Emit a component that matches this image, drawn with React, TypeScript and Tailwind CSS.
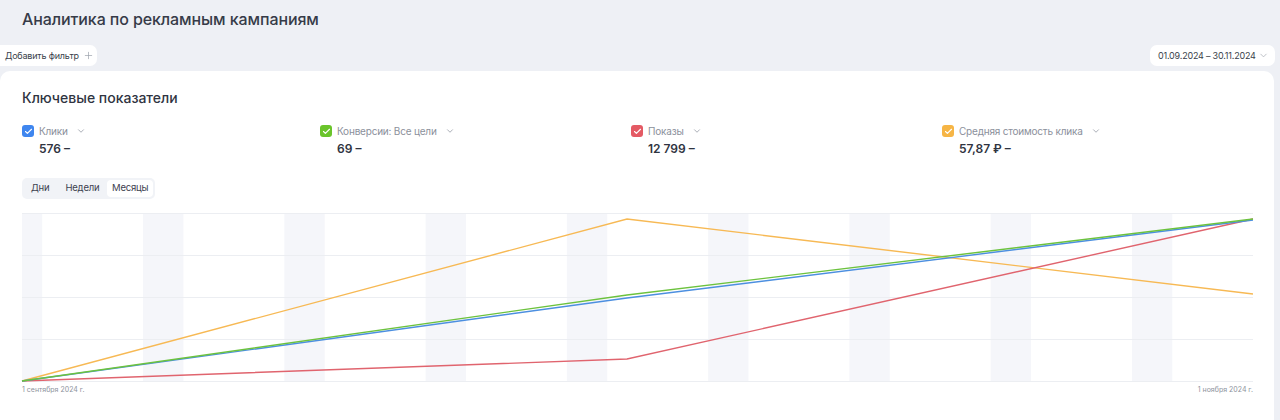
import { ChevronDown, Plus, Check } from "lucide-react";

const font = { fontFamily: "Inter, 'Noto Sans', sans-serif" };

const metrics = [
  { label: "Клики", value: "576", color: "bg-[#3f86ef]", w: "w-[298px]" },
  { label: "Конверсии: Все цели", value: "69", color: "bg-[#6ac42b]", w: "w-[311px]" },
  { label: "Показы", value: "12 799", color: "bg-[#e45a64]", w: "w-[311px]" },
  { label: "Средняя стоимость клика", value: "57,87 ₽", color: "bg-[#f6b545]", w: "w-[311px]" },
];

const W = 1231;
const H = 168;
const day = W / 61;
const weekends = [[0, 1], [6, 2], [13, 2], [20, 2], [27, 2], [34, 2], [41, 2], [48, 2], [55, 2]];

const lines = [
  { color: "#f7b954", pts: [[0, H], [605, 6], [W, 81]] },
  { color: "#e0646e", pts: [[0, H], [605, 146], [W, 6]] },
  { color: "#4c8fe0", pts: [[0, H], [605, 85], [W, 7]] },
  { color: "#6cc23e", pts: [[0, H], [605, 82], [W, 6]] },
];

function Chart() {
  return (
    <div className="mt-[14px] w-[1231px]">
      <svg width={W} height={H + 1} className="block overflow-visible">
        {weekends.map(([d, n]) => (
          <rect key={d} x={d * day} y={0} width={n * day} height={H} fill="#f5f6fa" />
        ))}
        {[0, 42, 84, 126, 168].map((y) => (
          <line key={y} x1={0} x2={W} y1={y + 0.5} y2={y + 0.5} stroke="#eceef2" />
        ))}
        {lines.map((l) => (
          <polyline
            key={l.color}
            points={l.pts.map((p) => p.join(",")).join(" ")}
            fill="none"
            stroke={l.color}
            strokeWidth={1.4}
          />
        ))}
      </svg>
      <div className="mt-[3px] flex justify-between text-[7px] text-[#8d929c]">
        <span>1 сентября 2024 г.</span>
        <span>1 ноября 2024 г.</span>
      </div>
    </div>
  );
}

export default function App() {
  return (
    <div className="h-[420px] overflow-hidden bg-[#eef0f5] text-[#2f3441]" style={font}>
      <div className="h-[45px] px-[22px] pt-[8px]">
        <h1 className="text-[16px] font-medium leading-[22px] tracking-[-0.1px] text-[#363b48]">
          Аналитика по рекламным кампаниям
        </h1>
      </div>
      <div className="flex h-[21px] items-center justify-between pr-[5px]">
        <button className="flex h-[21px] w-[97px] items-center gap-[4px] rounded-r-[7px] bg-white pl-[5px] text-[9px] tracking-[-0.2px] text-[#3a3f4b]">
          Добавить фильтр
          <Plus className="size-[11px] text-[#9aa0aa]" strokeWidth={1.5} />
        </button>
        <button className="flex h-[21px] w-[125px] items-center justify-between rounded-[7px] bg-white pl-[8px] pr-[6px] text-[9px] tracking-[-0.2px] text-[#3a3f4b]">
          01.09.2024 – 30.11.2024
          <ChevronDown className="size-[11px] text-[#a3a8b1]" strokeWidth={1.5} />
        </button>
      </div>
      <div className="mr-[6px] mt-[5px] h-[400px] rounded-t-[10px] bg-white pl-[22px] pt-[18px]">
        <h2 className="text-[14px] font-medium leading-[18px] text-[#2f3441]">Ключевые показатели</h2>
        <div className="mt-[18px] flex">
          {metrics.map((m) => (
            <div key={m.label} className={`${m.w} flex gap-[5px]`}>
              <span className={`${m.color} flex size-[12px] items-center justify-center rounded-[3px]`}>
                <Check className="size-[9px] text-white" strokeWidth={3} />
              </span>
              <div>
                <div className="flex h-[12px] items-center gap-[8px] text-[10px] tracking-[-0.2px] text-[#8b909b]">
                  {m.label}
                  <ChevronDown className="size-[10px] text-[#9aa0aa]" strokeWidth={2} />
                </div>
                <div className="mt-[5px] text-[12px] font-semibold leading-[14px] text-[#2f3441]">
                  {m.value} –
                </div>
              </div>
            </div>
          ))}
        </div>
        <div className="mt-[22px] flex h-[21px] w-[133px] items-center rounded-[5px] bg-[#f1f3f7] p-[2px] text-[9.5px] tracking-[-0.2px] text-[#3d4250]">
          <span className="pl-[7px] pr-[8px]">Дни</span>
          <span className="px-[8px]">Недели</span>
          <span className="flex h-full flex-1 items-center justify-center rounded-[4px] bg-white">Месяцы</span>
        </div>
        <Chart />
      </div>
    </div>
  );
}
